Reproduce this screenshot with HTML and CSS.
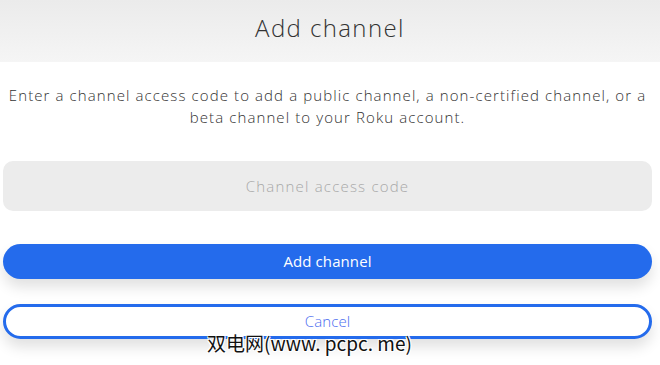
FILE: index.html
```html
<!DOCTYPE html>
<html lang="en">

<head>
    <meta charset="UTF-8">
    <meta name="viewport" content="width=device-width, initial-scale=1.0">
    <title>Add channel</title>
    <link rel="stylesheet" href="styles.css">
</head>

<body>
    <header class="modal-header">
        <h1>Add channel</h1>
    </header>

    <div class="modal-body">
        <p class="intro">Enter a channel access code to add a public channel, a non-certified channel, or a beta channel to your Roku account.</p>

        <form class="code-form">
            <input type="text" class="code-input" placeholder="Channel access code">
            <button type="submit" class="btn btn-primary">Add channel</button>
            <button type="button" class="btn btn-outline">Cancel</button>
        </form>
    </div>

    <div class="watermark">双电网(www. pcpc. me)</div>
</body>

</html>
```

FILE: styles.css
```css
* {
    margin: 0;
    padding: 0;
    box-sizing: border-box;
    font-family: 'Open Sans', 'Lato', sans-serif;
}

body {
    background-color: #fff;
    color: #444;
    position: relative;
    width: 660px;
    height: 365px;
    overflow: hidden;
}

.modal-header {
    height: 62px;
    background: linear-gradient(#ebebeb, #f5f5f5);
    display: flex;
    align-items: center;
    justify-content: center;
}

.modal-header h1 {
    font-size: 24px;
    font-weight: 300;
    color: #333;
    letter-spacing: 1.4px;
    margin-top: -7px;
}

.modal-body {
    padding: 22px 8px 0 3px;
}

.intro {
    font-size: 15px;
    font-weight: 300;
    line-height: 22px;
    text-align: center;
    letter-spacing: 1.1px;
    color: #333;
}

.code-form {
    display: flex;
    flex-direction: column;
    margin-top: 33px;
}

.code-input {
    height: 50px;
    border: none;
    border-radius: 10px;
    background-color: #ececec;
    text-align: center;
    font-size: 15px;
    font-weight: 300;
    letter-spacing: 1.2px;
    color: #444;
    outline: none;
}

.code-input::placeholder {
    color: #a8a8a8;
}

.btn {
    height: 35px;
    border-radius: 18px;
    font-size: 15px;
    letter-spacing: 0.1px;
    cursor: pointer;
    box-shadow: 0 8px 14px rgba(0, 0, 0, 0.12);
}

.btn-primary {
    margin-top: 33px;
    padding-bottom: 2px;
    background-color: #246bec;
    color: #fff;
    border: none;
    font-weight: 400;
}

.btn-outline {
    margin-top: 25px;
    padding-bottom: 2px;
    background-color: #fff;
    color: #4a6cf0;
    border: 3px solid #246bec;
    font-weight: 300;
}

.watermark {
    position: absolute;
    left: 207px;
    top: 329px;
    font-family: 'Noto Sans CJK SC', 'DejaVu Sans', sans-serif;
    font-size: 19px;
    font-weight: 400;
    color: #111;
    text-shadow: 1px 1px 0 #fff, -1px -1px 0 #fff, 1px -1px 0 #fff, -1px 1px 0 #fff;
    white-space: nowrap;
}
```
